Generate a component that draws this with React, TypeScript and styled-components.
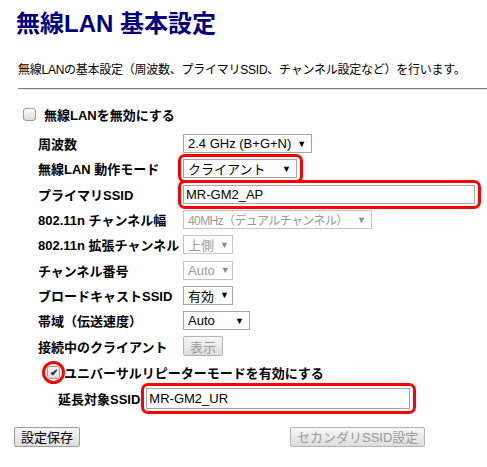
import styled, { createGlobalStyle, css } from 'styled-components';

const GlobalStyle = createGlobalStyle`
  html, body {
    margin: 0;
    padding: 0;
    background: #ffffff;
  }
  body {
    font-family: "Liberation Sans", "Noto Sans CJK JP", sans-serif;
    color: #000000;
    overflow: hidden;
  }
`;

const Page = styled.div`
  width: 487px;
  height: 467px;
  overflow: hidden;
`;

const Title = styled.h1`
  margin: 10px 0 0 16px;
  font-size: 24px;
  line-height: 28px;
  font-weight: bold;
  color: #000080;
`;

const Description = styled.p`
  margin: 24px 0 0 18px;
  font-size: 12px;
  line-height: 16px;
  letter-spacing: -0.25px;
`;

const Rule = styled.div`
  margin: 10px 0 0 18px;
  height: 0;
  border-top: 1px solid #808080;
  border-bottom: 1px solid #e4e4e4;
`;

const CheckRow = styled.label<{ $indent: number; $gap: number; $top: number }>`
  display: flex;
  align-items: center;
  gap: ${({ $gap }) => $gap}px;
  height: 20px;
  margin-top: ${({ $top }) => $top}px;
  padding-left: ${({ $indent }) => $indent}px;
  font-size: 13px;
  font-weight: bold;
`;

const Box = styled.span`
  position: relative;
  display: inline-flex;
  align-items: center;
  justify-content: center;
  width: 11px;
  height: 11px;
  border: 1px solid #9a9a9a;
  border-radius: 3px;
  background: linear-gradient(#fcfcfc, #dcdcdc);
  font-size: 10px;
  line-height: 1;
  color: #333;
`;

const Ring = styled.span`
  position: absolute;
  left: -6px;
  top: -6px;
  width: 17px;
  height: 17px;
  border: 3px solid #ff0000;
  border-radius: 50%;
`;

const Form = styled.div`
  display: grid;
  grid-template-columns: 145px auto;
  grid-auto-rows: 25.3px;
  align-items: center;
  margin-top: 7px;
  padding-left: 38px;
`;

const Label = styled.div`
  font-size: 13px;
  font-weight: bold;
  white-space: nowrap;
`;

const Field = styled.div`
  display: flex;
  align-items: center;
`;

const Highlight = styled.span`
  position: relative;
  display: inline-flex;
  &::after {
    content: '';
    position: absolute;
    left: -5px;
    right: -6px;
    top: -5px;
    bottom: -5px;
    border: 3px solid #ff0000;
    border-radius: 7px;
  }
`;

const SelectBox = styled.span<{ $width: number; $disabled?: boolean; $narrow?: boolean }>`
  display: inline-flex;
  align-items: center;
  justify-content: space-between;
  box-sizing: border-box;
  width: ${({ $width }) => $width}px;
  height: 19px;
  padding: 0 5px 0 4px;
  border: 1px solid ${({ $disabled }) => ($disabled ? '#c4c4c4' : '#a6a6a6')};
  background: #fff;
  font-size: ${({ $narrow }) => ($narrow ? 12 : 13)}px;
  letter-spacing: ${({ $narrow }) => ($narrow ? '-0.6px' : 'normal')};
  white-space: nowrap;
  overflow: hidden;
  color: ${({ $disabled }) => ($disabled ? '#9a9a9a' : '#000')};
`;

const Arrow = styled.span<{ $disabled?: boolean }>`
  font-size: 9px;
  margin-left: 6px;
  letter-spacing: 0;
  color: ${({ $disabled }) => ($disabled ? '#8c8c8c' : '#000')};
`;

const TextInput = styled.span<{ $width: number; $height: number }>`
  display: inline-flex;
  align-items: center;
  box-sizing: border-box;
  width: ${({ $width }) => $width}px;
  height: ${({ $height }) => $height}px;
  padding-left: 2px;
  border: 1px solid #a6a6a6;
  background: #fff;
  font-size: 13px;
  color: #000;
`;

const Button = styled.span<{ $disabled?: boolean }>`
  display: inline-flex;
  align-items: center;
  justify-content: center;
  box-sizing: border-box;
  height: 20px;
  padding: 0 6px;
  border: 1px solid #9c9c9c;
  border-radius: 2px;
  background: linear-gradient(#f7f7f7, #dedede);
  font-size: 13px;
  white-space: nowrap;
  ${({ $disabled }) =>
    $disabled
      ? css`
          color: #9a9a9a;
          border-color: #b4b4b4;
        `
      : css`
          color: #000;
        `}
`;

const RepeaterRow = styled.div`
  display: flex;
  align-items: center;
  gap: 6px;
  margin-top: 3px;
  padding-left: 58px;
  height: 26px;
`;

const ButtonBar = styled.div`
  display: flex;
  align-items: center;
  gap: 210px;
  margin-top: 15px;
  padding-left: 14px;
`;

const Select = ({
  value,
  width,
  disabled,
  narrow,
}: {
  value: string;
  width: number;
  disabled?: boolean;
  narrow?: boolean;
}) => (
  <SelectBox $width={width} $disabled={disabled} $narrow={narrow}>
    <span>{value}</span>
    <Arrow $disabled={disabled}>▼</Arrow>
  </SelectBox>
);

export default function App() {
  return (
    <Page>
      <GlobalStyle />
      <Title>無線LAN 基本設定</Title>
      <Description>無線LANの基本設定（周波数、プライマリSSID、チャンネル設定など）を行います。</Description>
      <Rule />

      <CheckRow $indent={23} $gap={8} $top={14}>
        <Box />
        無線LANを無効にする
      </CheckRow>

      <Form>
        <Label>周波数</Label>
        <Field>
          <Select value="2.4 GHz (B+G+N)" width={129} />
        </Field>

        <Label>無線LAN 動作モード</Label>
        <Field>
          <Highlight>
            <Select value="クライアント" width={114} />
          </Highlight>
        </Field>

        <Label>プライマリSSID</Label>
        <Field>
          <Highlight>
            <TextInput $width={292} $height={19}>MR-GM2_AP</TextInput>
          </Highlight>
        </Field>

        <Label>802.11n チャンネル幅</Label>
        <Field>
          <Select value="40MHz（デュアルチャンネル）" width={189} disabled narrow />
        </Field>

        <Label>802.11n 拡張チャンネル</Label>
        <Field>
          <Select value="上側" width={50} disabled />
        </Field>

        <Label>チャンネル番号</Label>
        <Field>
          <Select value="Auto" width={50} disabled />
        </Field>

        <Label>ブロードキャストSSID</Label>
        <Field>
          <Select value="有効" width={50} />
        </Field>

        <Label>帯域（伝送速度）</Label>
        <Field>
          <Select value="Auto" width={67} />
        </Field>

        <Label>接続中のクライアント</Label>
        <Field>
          <Button $disabled>表示</Button>
        </Field>
      </Form>

      <CheckRow $indent={47} $gap={4} $top={4}>
        <Box>
          ✔
          <Ring />
        </Box>
        ユニバーサルリピーターモードを有効にする
      </CheckRow>

      <RepeaterRow>
        <Label>延長対象SSID</Label>
        <Highlight>
          <TextInput $width={264} $height={21}>MR-GM2_UR</TextInput>
        </Highlight>
      </RepeaterRow>

      <ButtonBar>
        <Button>設定保存</Button>
        <Button $disabled>セカンダリSSID設定</Button>
      </ButtonBar>
    </Page>
  );
}
